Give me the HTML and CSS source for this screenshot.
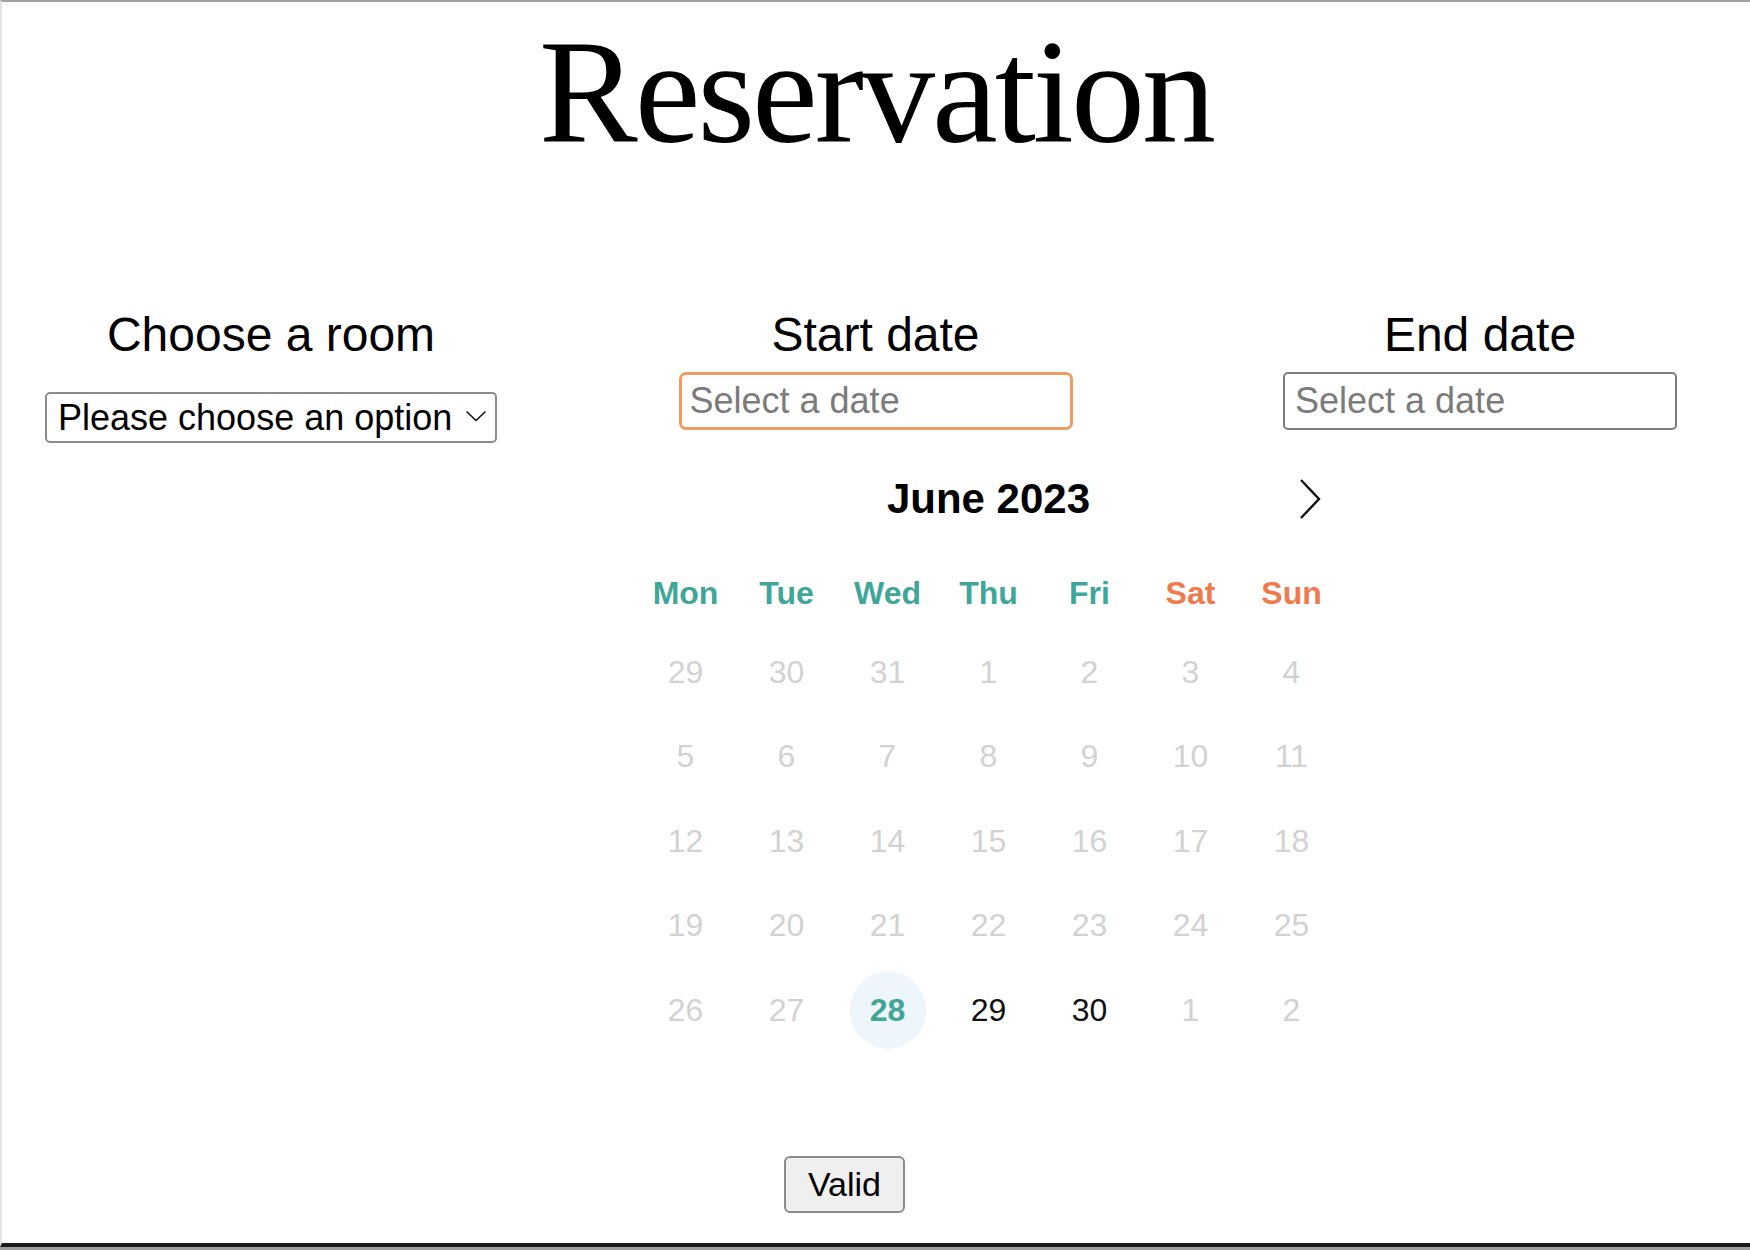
FILE: index.html
```html
<!DOCTYPE html>
<html lang="en">
<head>
<meta charset="utf-8">
<title>Reservation</title>
<link rel="stylesheet" href="styles.css">
</head>
<body>
<div class="frame">
  <h1 class="title">Reservation</h1>
  <div class="fields">
    <div class="col">
      <h2 class="label">Choose a room</h2>
      <div class="select-wrap">
        <select class="select"><option>Please choose an option</option></select>
        <svg class="select-chevron" width="22" height="12" viewBox="0 0 22 12"><polyline points="1.5,1.5 11,10.5 20.5,1.5" fill="none" stroke="#111" stroke-width="1.6"/></svg>
      </div>
    </div>
    <div class="col">
      <h2 class="label">Start date</h2>
      <input class="date-input is-active" type="text" placeholder="Select a date">
      <div class="calendar">
        <div class="cal-head">
          <span class="cal-month">June 2023</span>
          <button class="cal-next" type="button" aria-label="Next month"><svg width="24" height="42" viewBox="0 0 24 42"><polyline points="3,2 21,21 3,40" fill="none" stroke="#111" stroke-width="2.4"/></svg></button>
        </div>
        <div class="cal-week">
          <span class="wd">Mon</span><span class="wd">Tue</span><span class="wd">Wed</span><span class="wd">Thu</span><span class="wd">Fri</span><span class="wd weekend">Sat</span><span class="wd weekend">Sun</span>
        </div>
        <div class="cal-days">
          <span class="day">29</span><span class="day">30</span><span class="day">31</span><span class="day">1</span><span class="day">2</span><span class="day">3</span><span class="day">4</span>
          <span class="day">5</span><span class="day">6</span><span class="day">7</span><span class="day">8</span><span class="day">9</span><span class="day">10</span><span class="day">11</span>
          <span class="day">12</span><span class="day">13</span><span class="day">14</span><span class="day">15</span><span class="day">16</span><span class="day">17</span><span class="day">18</span>
          <span class="day">19</span><span class="day">20</span><span class="day">21</span><span class="day">22</span><span class="day">23</span><span class="day">24</span><span class="day">25</span>
          <span class="day">26</span><span class="day">27</span><span class="day today"><span class="today-mark">28</span></span><span class="day enabled">29</span><span class="day enabled">30</span><span class="day">1</span><span class="day">2</span>
        </div>
      </div>
    </div>
    <div class="col">
      <h2 class="label">End date</h2>
      <input class="date-input" type="text" placeholder="Select a date">
    </div>
  </div>
  <div class="actions"><button class="valid" type="button">Valid</button></div>
</div>
</body>
</html>
```

FILE: styles.css
```css
* { box-sizing: border-box; }

html, body { margin: 0; }

body {
  background: #9e9e9e;
  font-family: "Liberation Sans", Arial, sans-serif;
  color: #000;
}

.frame {
  height: 1247px;
  background: #fff;
  border-top: 2px solid #a3a3a3;
  border-left: 2px solid #e6e6e6;
  border-bottom: 4px solid #1a1a1a;
  overflow: hidden;
}

.title {
  margin: 0;
  padding-top: 5px;
  font-family: "Liberation Serif", "Times New Roman", serif;
  font-weight: 400;
  font-size: 148px;
  line-height: 170px;
  letter-spacing: -3px;
  text-align: center;
}

.fields {
  display: grid;
  grid-template-columns: repeat(3, 538px);
  column-gap: 66.5px;
  margin-top: 130px;
  align-items: start;
}

.col {
  display: flex;
  flex-direction: column;
  align-items: center;
  min-width: 0;
}

.label {
  margin: 0;
  font-size: 48px;
  font-weight: 400;
  line-height: 56px;
}

.select-wrap {
  position: relative;
  width: 452px;
  margin-top: 29px;
}

.select {
  appearance: none;
  -webkit-appearance: none;
  display: block;
  width: 100%;
  height: 51px;
  border: 2px solid #8b8b8b;
  border-radius: 5px;
  background: #fff;
  font-family: "Liberation Sans", Arial, sans-serif;
  font-size: 36px;
  color: #000;
  padding: 0 40px 0 11px;
}

.select-chevron {
  position: absolute;
  right: 10px;
  top: 18px;
}

.date-input {
  display: block;
  width: 394px;
  height: 58px;
  margin-top: 9px;
  border: 2px solid #7d7d7d;
  border-radius: 5px;
  font-family: "Liberation Sans", Arial, sans-serif;
  font-size: 36px;
  padding: 0 10px;
  outline: none;
  background: #fff;
}

.date-input.is-active {
  border: 3px solid #ee9c62;
  border-radius: 7px;
  padding: 0 8px;
}

.date-input::placeholder { color: #7b7b7b; }

.calendar {
  align-self: flex-start;
  margin-left: 28.5px;
  margin-top: 18px;
  width: 707px;
}

.cal-head {
  display: grid;
  grid-template-columns: 1fr auto 1fr;
  align-items: center;
  height: 102px;
}

.cal-month {
  grid-column: 2;
  font-size: 42px;
  font-weight: 700;
}

.cal-next {
  grid-column: 3;
  justify-self: end;
  margin-right: 20px;
  width: 24px;
  height: 42px;
  padding: 0;
  border: 0;
  background: none;
  display: flex;
}

.cal-week,
.cal-days {
  display: grid;
  grid-template-columns: repeat(7, 101px);
}

.cal-week {
  margin-top: 6px;
  height: 74px;
  align-items: center;
}

.wd {
  text-align: center;
  font-size: 32px;
  font-weight: 700;
  color: #3fa698;
}

.wd.weekend { color: #ef7b4c; }

.cal-days { grid-auto-rows: 84.5px; }

.day {
  display: flex;
  align-items: center;
  justify-content: center;
  font-size: 32px;
  color: #d2d2d2;
}

.day.enabled { color: #111; }

.today-mark {
  width: 76px;
  height: 78px;
  border-radius: 50%;
  background: #eef5fb;
  display: flex;
  align-items: center;
  justify-content: center;
  color: #3fa698;
  font-weight: 700;
}

.actions {
  display: flex;
  justify-content: center;
  padding-right: 63px;
  margin-top: 103.5px;
}

.valid {
  width: 121px;
  height: 57px;
  padding: 0;
  font-family: "Liberation Sans", Arial, sans-serif;
  font-size: 34px;
  color: #000;
  background: #efefef;
  border: 2px solid #8c8c8c;
  border-radius: 6px;
}
```
